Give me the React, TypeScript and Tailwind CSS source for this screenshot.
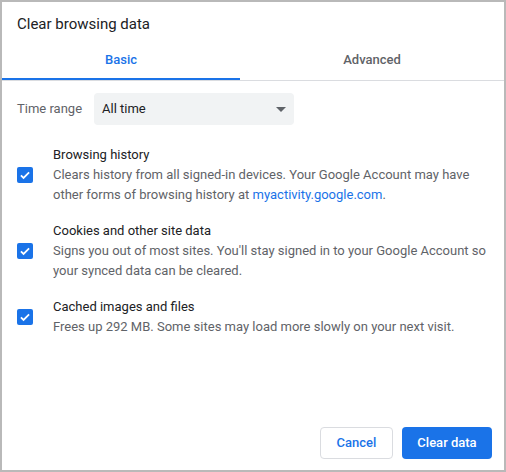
import React from 'react';

function Check() {
  return (
    <div className="flex h-4 w-4 shrink-0 items-center justify-center rounded-[2px] bg-[#1a73e8]">
      <svg viewBox="0 0 24 24" className="h-[14px] w-[14px]" fill="none" stroke="white" strokeWidth="3">
        <path d="M5 12.5l4.5 4.5L19 7.5" />
      </svg>
    </div>
  );
}

const items = [
  {
    title: 'Browsing history',
    desc: (
      <>
        Clears history from all signed-in devices. Your Google Account may have other forms of browsing history at{' '}
        <span className="text-[#1a73e8]">myactivity.google.com</span>.
      </>
    ),
  },
  {
    title: 'Cookies and other site data',
    desc: <>Signs you out of most sites. You'll stay signed in to your Google Account so your synced data can be cleared.</>,
  },
  {
    title: 'Cached images and files',
    desc: <>Frees up 292 MB. Some sites may load more slowly on your next visit.</>,
  },
];

export default function App() {
  return (
    <div className="h-[472px] w-[506px] border-2 border-[#b9b9b9] bg-white font-['Roboto',sans-serif] text-[13px] text-[#202124]">
      <div className="flex h-full flex-col">
        <div className="px-[15px] pt-[12px] text-[15px] leading-5">Clear browsing data</div>

        <div className="mt-[4px] flex border-b border-[#dadce0]">
          <div className="flex h-[42px] w-[238px] items-center justify-center border-b-2 border-[#1a73e8] pt-[3px] text-[13px] font-medium text-[#1a73e8]">
            Basic
          </div>
          <div className="flex h-[42px] flex-1 items-center justify-center pt-[1px] text-[13px] font-medium text-[#5f6368]">
            Advanced
          </div>
        </div>

        <div className="mt-[12px] flex items-center px-[15px]">
          <span className="w-[77px] text-[#5f6368]">Time range</span>
          <div className="flex h-[32px] w-[200px] items-center justify-between rounded-[4px] bg-[#f1f3f4] pl-[8px] pr-[8px]">
            <span>All time</span>
            <svg viewBox="0 0 10 5" className="h-[5px] w-[10px]">
              <path d="M0 0h10L5 5z" fill="#5f6368" />
            </svg>
          </div>
        </div>

        <div className="mt-[20px] flex flex-col gap-[16px] px-[15px]">
          {items.map((it) => (
            <div key={it.title} className="flex items-center">
              <Check />
              <div className="ml-[20px] leading-5">
                <div className="text-[#202124]">{it.title}</div>
                <p className="text-[#5f6368]">{it.desc}</p>
              </div>
            </div>
          ))}
        </div>

        <div className="mt-auto flex justify-end gap-[9px] px-[12px] pb-[11px]">
          <button className="h-[32px] w-[73px] rounded-[4px] border border-[#dadce0] bg-white text-[13px] font-medium text-[#1a73e8]">
            Cancel
          </button>
          <button className="h-[32px] w-[90px] rounded-[4px] bg-[#1a73e8] text-[13px] font-medium text-white">
            Clear data
          </button>
        </div>
      </div>
    </div>
  );
}
